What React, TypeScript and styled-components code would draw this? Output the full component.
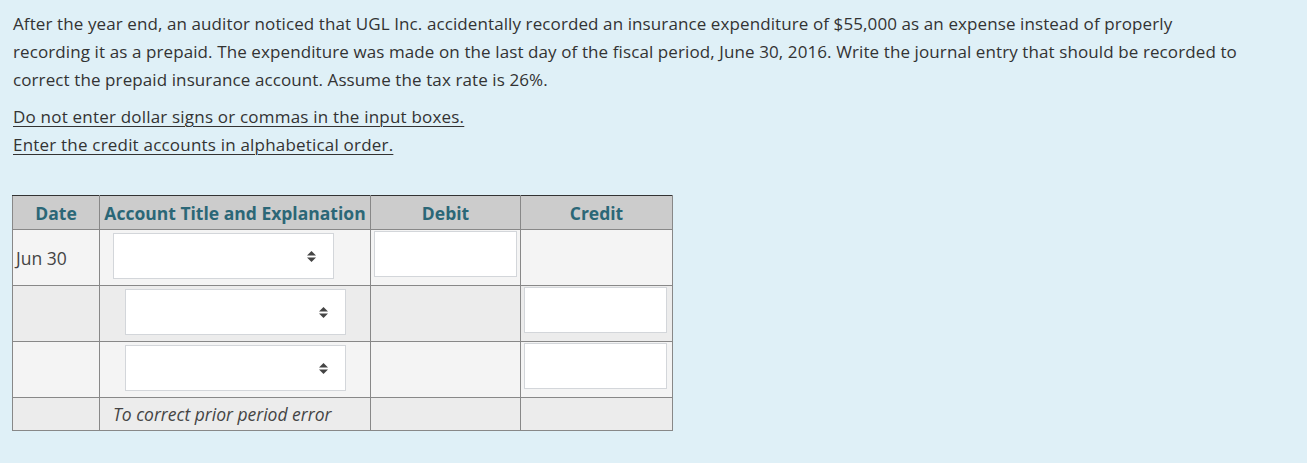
import styled, { createGlobalStyle } from "styled-components";

const GlobalStyle = createGlobalStyle`
    html, body {
        margin: 0;
        padding: 0;
        background: #dff0f7;
    }
    body {
        font-family: "Open Sans", "Noto Sans", sans-serif;
        color: #333;
    }
`;

const Page = styled.main`
    padding: 10px 13px 20px 13px;
    width: 1300px;
    box-sizing: border-box;
`;

const Question = styled.p`
    margin: 0;
    font-size: 17px;
    line-height: 28px;
    letter-spacing: 0.1px;
`;

const Notes = styled.div`
    margin-top: 9px;
    font-size: 17px;
    line-height: 28px;
    letter-spacing: 0.2px;
    p {
        margin: 0;
        text-decoration: underline;
        text-decoration-thickness: 1px;
        text-underline-offset: 3px;
    }
`;

const Journal = styled.table`
    margin-top: 36px;
    margin-left: -1px;
    width: 660px;
    table-layout: fixed;
    border-collapse: collapse;
    border: 1px solid #333;
    font-size: 17.5px;
    th {
        background: #cccccc;
        color: #2b6777;
        font-weight: 700;
        height: 33px;
        padding: 0;
        border: 1px solid #888;
        border-top-color: #333;
        white-space: nowrap;
    }
    td {
        border: 1px solid #888;
        padding: 0;
    }
`;

const Col = styled.col<{ $w: number }>`
    width: ${p => p.$w}px;
`;

const Row = styled.tr<{ $shade?: boolean; $short?: boolean }>`
    background: ${p => (p.$shade ? "#ececec" : "#f4f4f4")};
    height: ${p => (p.$short ? 33 : 56)}px;
`;

const DateCell = styled.td`
    padding-left: 3px !important;
    color: #444;
`;

const AccountCell = styled.td<{ $indent?: boolean }>`
    vertical-align: top;
    padding: 3px 0 0 ${p => (p.$indent ? 25 : 13)}px !important;
`;

const ExplanationCell = styled.td`
    padding-left: 13px !important;
`;

const AmountCell = styled.td`
    vertical-align: top;
    padding: 1px 3px 0 3px !important;
`;

const SelectBox = styled.div`
    width: 221px;
    height: 46px;
    box-sizing: border-box;
    background: #fff;
    border: 1px solid #d3d6da;
    display: flex;
    align-items: center;
    justify-content: flex-end;
    padding-right: 17px;
`;

const Arrows = styled.svg`
    width: 9px;
    height: 11px;
`;

const AmountInput = styled.input`
    display: block;
    width: 143px;
    height: 46px;
    box-sizing: border-box;
    border: 1px solid #d3d6da;
    background: #fff;
    margin: 0;
`;

const Explanation = styled.span`
    font-style: italic;
    color: #444;
`;

function Select() {
    return (
        <SelectBox>
            <Arrows viewBox="0 0 9 11">
                <path d="M4.5 0 L9 4.5 H0 Z" fill="#444" />
                <path d="M0 6.5 H9 L4.5 11 Z" fill="#444" />
            </Arrows>
        </SelectBox>
    );
}

export default function App() {
    return (
        <Page>
            <GlobalStyle />
            <Question>
                After the year end, an auditor noticed that UGL Inc. accidentally recorded an insurance expenditure of $55,000 as an expense instead of properly<br />
                recording it as a prepaid. The expenditure was made on the last day of the fiscal period, June 30, 2016. Write the journal entry that should be recorded to<br />
                correct the prepaid insurance account. Assume the tax rate is 26%.
            </Question>
            <Notes>
                <p>Do not enter dollar signs or commas in the input boxes.</p>
                <p>Enter the credit accounts in alphabetical order.</p>
            </Notes>
            <Journal>
                <colgroup>
                    <Col $w={87} />
                    <Col $w={271} />
                    <Col $w={150} />
                    <Col $w={152} />
                </colgroup>
                <thead>
                    <tr>
                        <th>Date</th>
                        <th>Account Title and Explanation</th>
                        <th>Debit</th>
                        <th>Credit</th>
                    </tr>
                </thead>
                <tbody>
                    <Row>
                        <DateCell>Jun 30</DateCell>
                        <AccountCell><Select /></AccountCell>
                        <AmountCell><AmountInput /></AmountCell>
                        <AmountCell />
                    </Row>
                    <Row $shade>
                        <DateCell />
                        <AccountCell $indent><Select /></AccountCell>
                        <AmountCell />
                        <AmountCell><AmountInput /></AmountCell>
                    </Row>
                    <Row>
                        <DateCell />
                        <AccountCell $indent><Select /></AccountCell>
                        <AmountCell />
                        <AmountCell><AmountInput /></AmountCell>
                    </Row>
                    <Row $shade $short>
                        <DateCell />
                        <ExplanationCell><Explanation>To correct prior period error</Explanation></ExplanationCell>
                        <AmountCell />
                        <AmountCell />
                    </Row>
                </tbody>
            </Journal>
        </Page>
    );
}
